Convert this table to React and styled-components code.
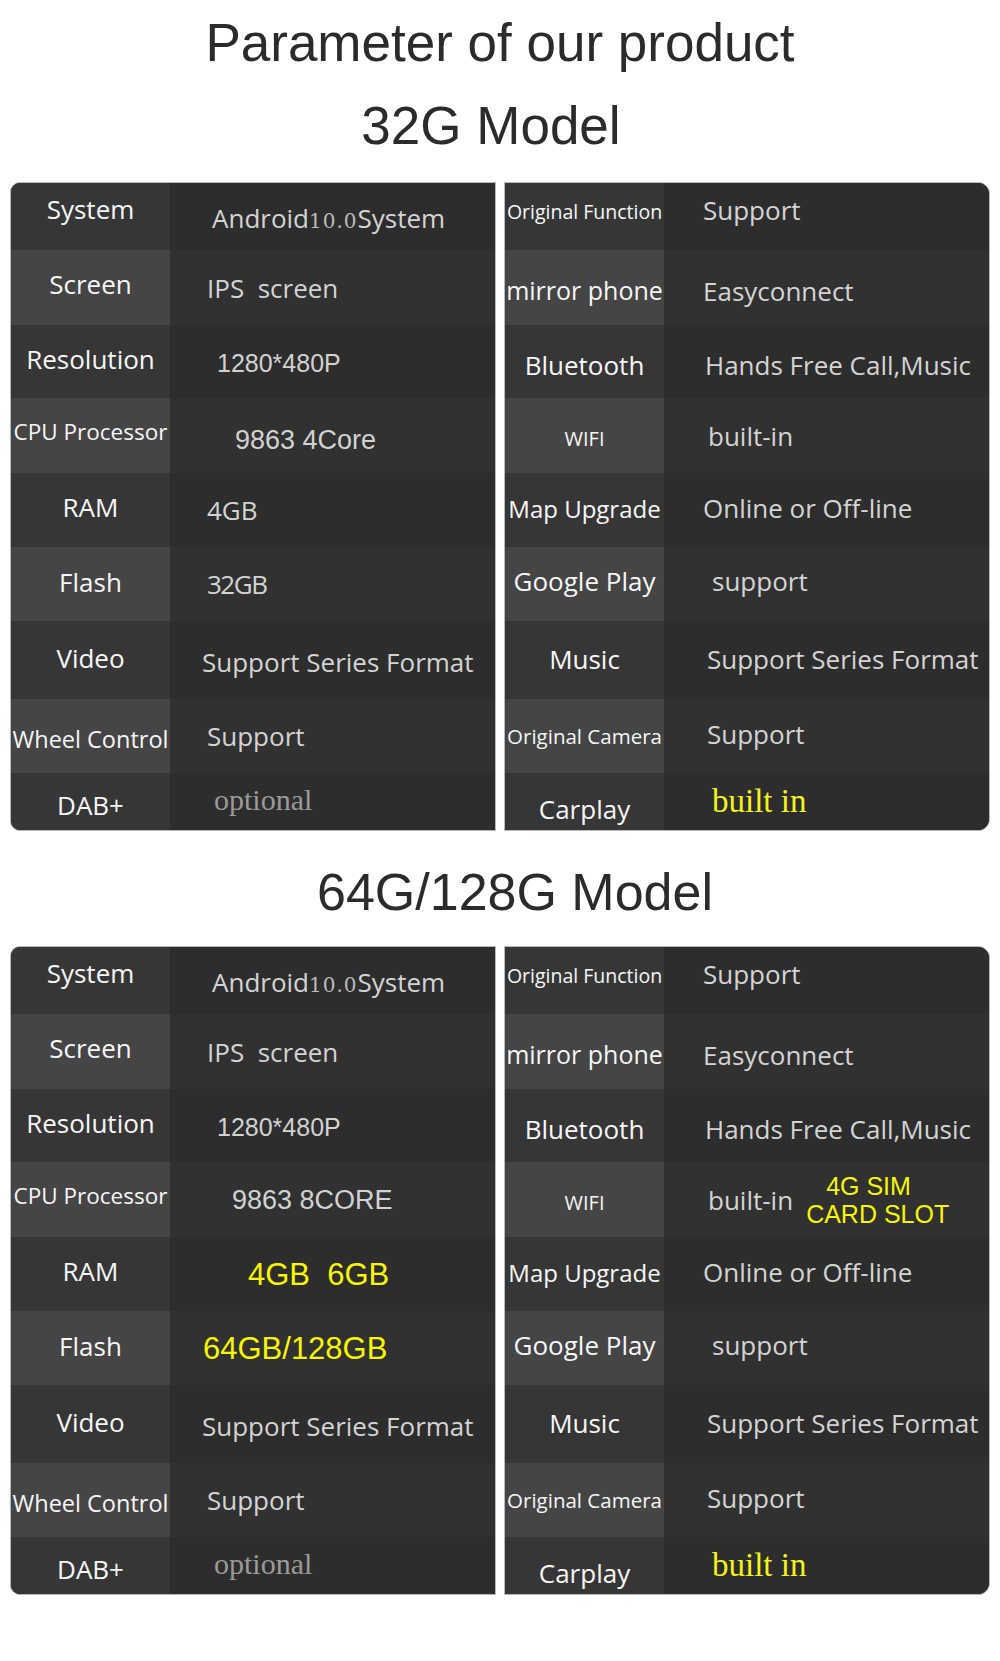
import React from 'react'
import styled, { createGlobalStyle } from 'styled-components'

const GlobalStyle = createGlobalStyle`
  body {
    margin: 0;
    background: #fff;
  }
`

const Page = styled.div`
  width: 1000px;
  padding-bottom: 66px;
  font-family: 'Open Sans', 'Noto Sans', sans-serif;
`

const Heading = styled.h1`
  margin: ${p => p.$top}px 0 0;
  padding: 0 ${p => (p.$shift < 0 ? -2 * p.$shift : 0)}px 0 ${p => (p.$shift > 0 ? 2 * p.$shift : 0)}px;
  font-family: 'Liberation Sans', Arial, sans-serif;
  font-weight: 400;
  font-size: ${p => p.$size}px;
  line-height: ${p => p.$size}px;
  color: #2b2b2b;
  text-align: center;
  white-space: pre;
`

const Table = styled.div`
  display: grid;
  grid-template-columns: 486px 486px;
  gap: 8px;
  margin: ${p => p.$top}px 0 0 10px;
`

const Panel = styled.div`
  border: 1px solid #b9b9b9;
  border-radius: ${p => (p.$side === 'left' ? '10px 0 0 10px' : '0 12px 12px 0')};
  overflow: hidden;
  background: #2e2e2e;
`

const Row = styled.div`
  display: grid;
  grid-template-columns: 159px 1fr;
  height: ${p => p.$h}px;
`

// shifts the centred content up (negative) or down (positive)
const nudge = dy => `${dy > 0 ? 2 * dy : 0}px 0 ${dy < 0 ? -2 * dy : 0}px`

const LabelCell = styled.div`
  display: flex;
  align-items: center;
  justify-content: center;
  padding: ${p => nudge(p.$dy || 0)};
  background: ${p => (p.$light ? '#454545' : '#363636')};
  color: #f6f6f6;
  font-size: ${p => p.$size || 26}px;
  font-weight: 500;
  line-height: 1;
  white-space: nowrap;
`

const ValueCell = styled.div`
  display: flex;
  align-items: center;
  padding: ${p => nudge(p.$dy || 0)};
  padding-left: ${p => p.$x}px;
  background: ${p => (p.$light ? '#313131' : '#2d2d2d')};
  color: #d4d4d4;
  font-size: 26px;
  font-weight: 500;
  line-height: 1;
`

const ValueText = styled.div`
  white-space: pre;
  letter-spacing: ${p => p.$tight || 0}px;
`

const Arial = styled.span`
  font-family: 'Liberation Sans', Arial, sans-serif;
  font-weight: 400;
  font-size: ${p => p.$size}px;
  color: ${p => p.$color || '#d2d2d2'};
`

const Serif = styled.span`
  font-family: 'Liberation Serif', 'Times New Roman', serif;
  font-weight: 400;
  font-size: ${p => p.$size}px;
  color: ${p => p.$color};
`

const OldNum = styled.span`
  font-family: 'DejaVu Serif', serif;
  font-weight: 400;
  font-size: 20px;
  letter-spacing: 1px;
  color: #bdbdbd;
`

const SimRow = styled.div`
  display: flex;
  align-items: center;
`

const SimNote = styled.div`
  margin-left: 13px;
  font-family: 'Liberation Sans', Arial, sans-serif;
  font-weight: 400;
  font-size: 25px;
  line-height: 28px;
  color: #f7f700;

  span {
    display: block;
  }
  span:first-child {
    padding-left: 20px;
  }
`

const YELLOW = '#f7f700'

const baseLeft = [
  { h: 67, label: 'System', ly: -8, value: <>Android<OldNum>10.0</OldNum>System</>, x: 42, vy: 1 },
  { h: 75, label: 'Screen', ly: -4, value: 'IPS  screen', x: 37 },
  { h: 73, label: 'Resolution', ly: -3, value: <Arial $size={25}>1280*480P</Arial>, x: 47, vy: 1 },
  { h: 75, label: 'CPU Processor', size: 22.5, ly: -3, value: <Arial $size={27}>9863 4Core</Arial>, x: 65, vy: 4 },
  { h: 74, label: 'RAM', ly: -3, value: '4GB', x: 37 },
  { h: 74, label: 'Flash', ly: -2, value: '32GB', tight: -1.5, x: 37 },
  { h: 78, label: 'Video', ly: -2, value: 'Support Series Format', x: 32, vy: 2 },
  { h: 74, label: 'Wheel Control', size: 23.5, ly: 4, value: 'Support', x: 37 },
  { h: 57, label: 'DAB+', ly: 3, value: <Serif $size={30} $color="#9a9a9a">optional</Serif>, x: 44, vy: -2 },
]

const baseRight = [
  { h: 67, label: 'Original Function', size: 19.5, ly: -5, value: 'Support', x: 39, vy: -7 },
  { h: 75, label: 'mirror phone', size: 25, ly: 3, value: 'Easyconnect', x: 39, vy: 3 },
  { h: 73, label: 'Bluetooth', ly: 3, value: 'Hands Free Call,Music', x: 41, vy: 3 },
  { h: 75, label: 'WIFI', size: 20, ly: 3, value: 'built-in', x: 44 },
  { h: 74, label: 'Map Upgrade', size: 24, ly: -1, value: 'Online or Off-line', x: 39, vy: -2 },
  { h: 74, label: 'Google Play', ly: -3, value: 'support', x: 48, vy: -3 },
  { h: 78, label: 'Music', ly: -1, value: 'Support Series Format', x: 43, vy: -1 },
  { h: 74, label: 'Original Camera', size: 20.5, ly: 0, value: 'Support', x: 43, vy: -2 },
  { h: 57, label: 'Carplay', ly: 7, value: <Serif $size={33} $color="#f3f31c">built in</Serif>, x: 48 },
]

const bigLeft = baseLeft.map((r, i) => {
  if (i === 3) return { ...r, value: <Arial $size={27}>9863 8CORE</Arial>, x: 62, vy: 0 }
  if (i === 4) return { ...r, value: <Arial $size={31} $color={YELLOW}>4GB  6GB</Arial>, x: 78, vy: 0 }
  if (i === 5) return { ...r, value: <Arial $size={31} $color={YELLOW}>64GB/128GB</Arial>, x: 33, tight: 0, vy: 0 }
  return r
})

const bigRight = baseRight.map((r, i) =>
  i === 3
    ? {
        ...r,
        value: (
          <SimRow>
            built-in
            <SimNote>
              <span>4G SIM</span>
              <span>CARD SLOT</span>
            </SimNote>
          </SimRow>
        ),
      }
    : r
)

const SpecPanel = ({ side, rows }) => (
  <Panel $side={side}>
    {rows.map((r, i) => (
      <Row key={r.label} $h={r.h}>
        <LabelCell $light={i % 2 === 1} $size={r.size} $dy={r.ly}>
          {r.label}
        </LabelCell>
        <ValueCell $light={i % 2 === 1} $x={r.x} $dy={r.vy}>
          <ValueText $tight={r.tight}>{r.value}</ValueText>
        </ValueCell>
      </Row>
    ))}
  </Panel>
)

const App = () => (
  <Page>
    <GlobalStyle />
    <Heading $top={16} $size={53}>Parameter of our product</Heading>
    <Heading $top={30} $size={53} $shift={-9}>32G Model</Heading>
    <Table $top={30}>
      <SpecPanel side="left" rows={baseLeft} />
      <SpecPanel side="right" rows={baseRight} />
    </Table>
    <Heading $top={35} $size={52} $shift={15}>64G/128G Model</Heading>
    <Table $top={28}>
      <SpecPanel side="left" rows={bigLeft} />
      <SpecPanel side="right" rows={bigRight} />
    </Table>
  </Page>
)

export default App
